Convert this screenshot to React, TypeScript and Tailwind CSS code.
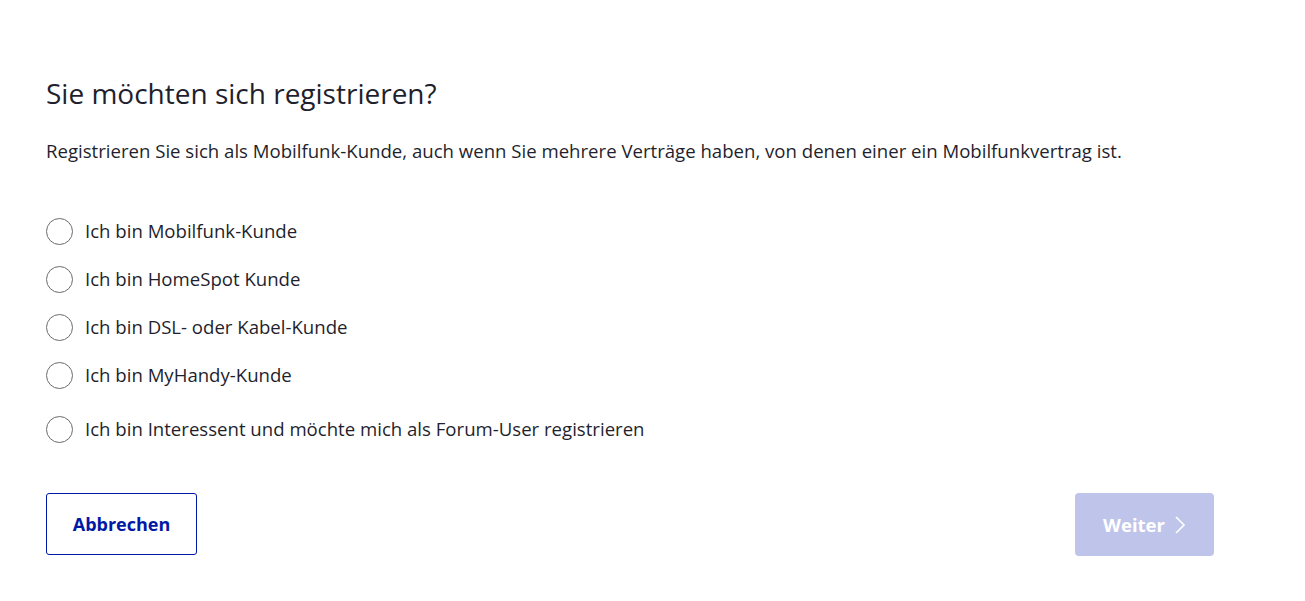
import { useState } from "react";

const options = [
  { id: "mobil", label: "Ich bin Mobilfunk-Kunde" },
  { id: "homespot", label: "Ich bin HomeSpot Kunde" },
  { id: "dsl", label: "Ich bin DSL- oder Kabel-Kunde" },
  { id: "myhandy", label: "Ich bin MyHandy-Kunde" },
  { id: "forum", label: "Ich bin Interessent und möchte mich als Forum-User registrieren" },
];

export default function App() {
  const [selected, setSelected] = useState<string | null>(null);

  return (
    <div className="min-h-[601px] w-full bg-white font-['Open_Sans',sans-serif] text-[#1f1f2e]">
      <div className="w-[1214px] pl-[46px] pt-[74px]">
        <h1 className="text-[28px] leading-[38px] font-normal">Sie möchten sich registrieren?</h1>
        <p className="mt-[26px] text-[18.6px] leading-[26px]">
          Registrieren Sie sich als Mobilfunk-Kunde, auch wenn Sie mehrere Verträge haben, von denen einer ein Mobilfunkvertrag ist.
        </p>

        {/* Options */}
        <div className="mt-[43px] flex flex-col">
          {options.map((opt, i) => (
            <label
              key={opt.id}
              className={`flex h-[48px] cursor-pointer items-center gap-[12px] ${i === 4 ? "mt-[6px]" : ""}`}
              onClick={() => setSelected(opt.id)}
            >
              <span className="flex h-[27px] w-[27px] shrink-0 items-center justify-center rounded-full border border-[#6b6b6b]">
                {selected === opt.id && <span className="h-[13px] w-[13px] rounded-full bg-[#0019a5]" />}
              </span>
              <span className="text-[18.6px] leading-[26px]">{opt.label}</span>
            </label>
          ))}
        </div>

        {/* Actions */}
        <div className="mt-[40px] flex items-start justify-between">
          <button
            type="button"
            className="h-[62px] w-[151px] rounded-[3px] border border-[#0019a5] text-[18px] font-bold text-[#0019a5]"
          >
            Abbrechen
          </button>
          <button
            type="button"
            disabled={!selected}
            className={`flex h-[63px] w-[139px] items-center justify-center gap-[9px] rounded-[4px] text-[18.5px] font-bold text-white ${
              selected ? "bg-[#0019a5]" : "bg-[#bfc5ea]"
            }`}
          >
            Weiter
            <svg className="h-[20px] w-[12px]" viewBox="0 0 12 20" fill="none" stroke="currentColor" strokeWidth="1.6">
              <path d="M2 2l8 8-8 8" />
            </svg>
          </button>
        </div>
      </div>
    </div>
  );
}
